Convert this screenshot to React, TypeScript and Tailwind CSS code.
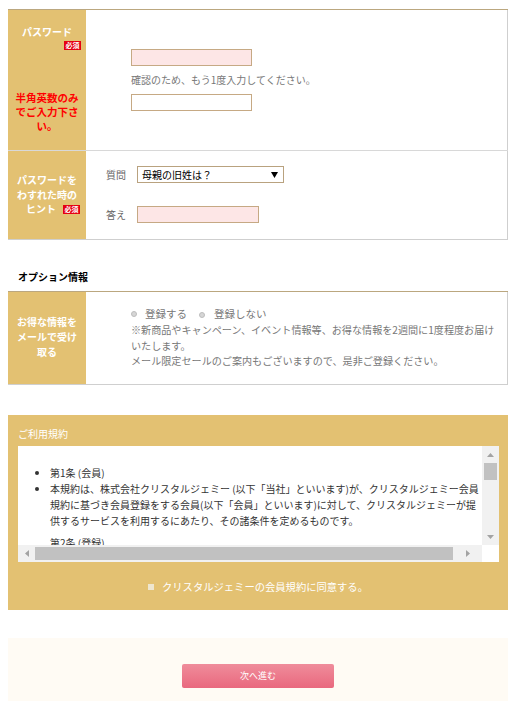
import React from "react";

const Badge = () => (
  <span className="inline-flex items-center justify-center bg-[#e50012] text-white text-[7px] leading-none font-bold w-[17px] h-[9px]">
    必須
  </span>
);

const Radio = () => (
  <span className="inline-block w-[6px] h-[6px] rounded-full bg-[#d6d6d6] border border-[#bdbdbd]" />
);

const Tri = ({ dir }: { dir: "up" | "down" | "left" | "right" }) => {
  const pts =
    dir === "up"
      ? "0,4 3.5,0 7,4"
      : dir === "down"
      ? "0,0 7,0 3.5,4"
      : dir === "left"
      ? "4,0 4,7 0,3.5"
      : "0,0 0,7 4,3.5";
  const w = dir === "up" || dir === "down" ? 7 : 4;
  const h = dir === "up" || dir === "down" ? 4 : 7;
  return (
    <svg width={w} height={h} viewBox={`0 0 ${w} ${h}`}>
      <polygon points={pts} fill="#a3a3a3" />
    </svg>
  );
};

export default function App() {
  return (
    <div className="w-[517px] h-[701px] overflow-hidden bg-white font-['Noto_Sans_CJK_JP','Noto_Sans',sans-serif] text-[10px] text-[#666]">
      {/* Table 1 */}
      <div className="ml-[8px] mt-[9px] w-[500px] border-t border-[#bba77f]">
        {/* Row 1 */}
        <div className="flex h-[140px]">
          <div className="w-[78px] bg-[#e3c172] flex flex-col items-center pt-[15px]">
            <div className="text-white font-bold leading-[14px]">パスワード</div>
            <div className="self-end mr-[5px] mt-[2px] flex">
              <Badge />
            </div>
            <div className="mt-[41px] text-[#ff0000] font-bold leading-[14px] text-center text-[10.5px]">
              半角英数のみ
              <br />
              でご入力下さ
              <br />
              い。
            </div>
          </div>
          <div className="flex-1 border-r border-[#cfcfcf] pl-[45px] pt-[39px] flex flex-col">
            <div className="w-[121px] h-[17px] bg-[#fde6e6] border border-[#c6a984]" />
            <div className="mt-[7px] leading-[14px] text-[#777]">確認のため、もう1度入力してください。</div>
            <div className="mt-[7px] w-[121px] h-[17px] bg-white border border-[#c6a984]" />
          </div>
        </div>
        {/* Row 2 */}
        <div className="flex h-[90px] border-t border-[#d8d8d8] border-b border-b-[#cfcfcf]">
          <div className="w-[78px] bg-[#e3c172] flex flex-col items-center pt-[22px] text-white font-bold leading-[14.5px] text-center">
            <div>パスワードを</div>
            <div>わすれた時の</div>
            <div className="flex items-center gap-[7px] ml-[12px]">
              <span>ヒント</span>
              <Badge />
            </div>
          </div>
          <div className="flex-1 border-r border-[#cfcfcf] pl-[20px] pt-[15px] flex flex-col">
            <div className="flex items-center h-[17px]">
              <span className="w-[20px] text-[#666]">質問</span>
              <div className="ml-[11px] w-[147px] h-[17px] border border-[#b9a27f] bg-white flex items-center justify-between pl-[4px] pr-[5px] text-black">
                <span className="leading-none">母親の旧姓は？</span>
                <svg width="7" height="6" viewBox="0 0 7 6">
                  <polygon points="0,0 7,0 3.5,6" fill="#000" />
                </svg>
              </div>
            </div>
            <div className="flex items-center h-[17px] mt-[23px]">
              <span className="w-[20px] text-[#666]">答え</span>
              <div className="ml-[11px] w-[122px] h-[17px] bg-[#fde6e6] border border-[#c6a984]" />
            </div>
          </div>
        </div>
      </div>

      {/* Heading */}
      <div className="ml-[18px] mt-[30px] text-black font-bold leading-[14px]">オプション情報</div>

      {/* Table 3 */}
      <div className="ml-[8px] mt-[7px] w-[500px] border-t border-[#bba77f] border-b border-b-[#cfcfcf]">
        <div className="flex h-[92px]">
          <div className="w-[78px] bg-[#e3c172] flex flex-col items-center pt-[22px] text-white font-bold leading-[15px] text-center">
            <div>お得な情報を</div>
            <div>メールで受け</div>
            <div>取る</div>
          </div>
          <div className="flex-1 border-r border-[#cfcfcf] pl-[45px] pt-[14px] text-[#777]">
            <div className="flex items-center h-[15px] leading-[15px]">
              <Radio />
              <span className="ml-[8px] text-[10.5px]">登録する</span>
              <span className="ml-[12px]"><Radio /></span>
              <span className="ml-[9px] text-[10.5px]">登録しない</span>
            </div>
            <div className="leading-[15.5px] mt-[1px] whitespace-nowrap text-[10.1px]">
              ※新商品やキャンペーン、イベント情報等、お得な情報を2週間に1度程度お届け
              <br />
              いたします。
              <br />
              メール限定セールのご案内もございますので、是非ご登録ください。
            </div>
          </div>
        </div>
      </div>

      {/* Terms */}
      <div className="ml-[8px] mt-[30px] w-[500px] h-[195px] bg-[#e3c172] pt-[12px]">
        <div className="pl-[10px] text-white leading-[14px]">ご利用規約</div>
        <div className="ml-[10px] mt-[5px] w-[481px] h-[116px] bg-white flex flex-col">
          <div className="flex h-[99px]">
            <div className="flex-1 overflow-hidden pt-[19px] text-[#333] leading-[16px] whitespace-nowrap">
              <ul className="list-disc pl-[32px]">
                <li>第1条 (会員)</li>
                <li>
                  本規約は、株式会社クリスタルジェミー (以下「当社」といいます)が、クリスタルジェミー会員
                  <br />
                  規約に基づき会員登録をする会員(以下「会員」といいます)に対して、クリスタルジェミーが提
                  <br />
                  供するサービスを利用するにあたり、その諸条件を定めるものです。
                </li>
              </ul>
              <div className="pl-[32px] mt-[6px]">第2条 (登録)</div>
            </div>
            <div className="w-[17px] bg-[#f1f1f1] flex flex-col items-center">
              <div className="h-[17px] flex items-center justify-center">
                <Tri dir="up" />
              </div>
              <div className="w-[13px] h-[17px] bg-[#c1c1c1]" />
              <div className="flex-1" />
              <div className="h-[17px] flex items-center justify-center">
                <Tri dir="down" />
              </div>
            </div>
          </div>
          <div className="flex h-[17px]">
            <div className="flex-1 bg-[#f1f1f1] flex items-center">
              <div className="w-[17px] flex items-center justify-center">
                <Tri dir="left" />
              </div>
              <div className="w-[418px] h-[13px] bg-[#c1c1c1]" />
              <div className="flex-1 flex items-center justify-center">
                <Tri dir="right" />
              </div>
            </div>
            <div className="w-[17px] bg-white" />
          </div>
        </div>
        <div className="flex items-center justify-center mt-[18px] h-[14px] text-white">
          <span className="inline-block w-[6px] h-[6px] bg-[#eee6cf] mr-[8px]" />
          <span className="leading-[14px] text-[10.3px]">クリスタルジェミーの会員規約に同意する。</span>
        </div>
      </div>

      {/* Bottom */}
      <div className="ml-[8px] mt-[28px] w-[500px] h-[64px] bg-[#fffbf4] pt-[26px] flex justify-center">
        <div className="w-[152px] h-[24px] rounded-[2px] bg-gradient-to-b from-[#ef8c9b] to-[#e9687e] text-white text-[9px] flex items-center justify-center">
          次へ進む
        </div>
      </div>
    </div>
  );
}
